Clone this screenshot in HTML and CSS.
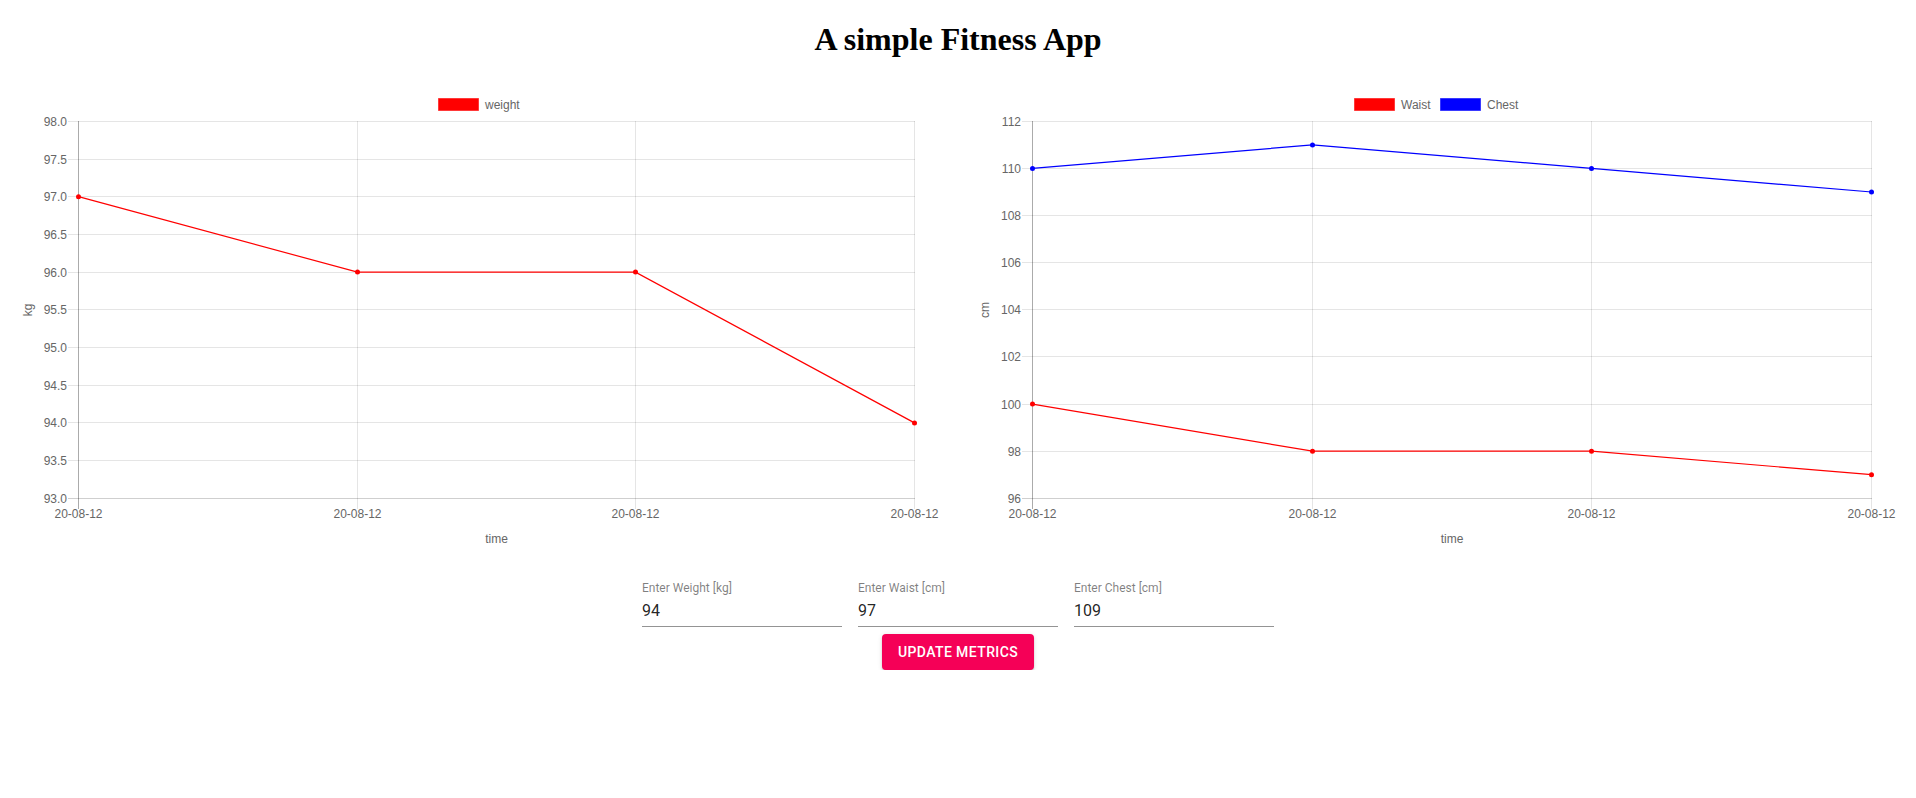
FILE: index.html
```
<!DOCTYPE html>
<html>
	<head>
		<title>A simple Fitness App</title>
		<meta charset="utf-8">
		<link rel="stylesheet" href="styles.css">
	</head>
	<body>
		<h1>A simple Fitness App</h1>
		<div class="charts">
			<!-- weight chart -->
			<svg class="chart" width="941" height="480" viewBox="0 0 941 480">
				<rect class="swatch red" x="430.5" y="19.5" width="40" height="12"/>
				<text class="legend" x="477" y="30">weight</text>

				<path class="grid" d="M60 42.5H907M60 80.5H907M60 117.5H907M60 155.5H907M60 193.5H907M60 230.5H907M60 268.5H907M60 306.5H907M60 343.5H907M60 381.5H907M349.5 42V430M627.5 42V430M906.5 42V430"/>
				<path class="border" d="M60 419.5H907"/>
				<path class="axis" d="M70.5 42V430"/>

				<g class="ticks-y">
					<text x="59" y="46.5">98.0</text>
					<text x="59" y="84.5">97.5</text>
					<text x="59" y="121.5">97.0</text>
					<text x="59" y="159.5">96.5</text>
					<text x="59" y="197.5">96.0</text>
					<text x="59" y="234.5">95.5</text>
					<text x="59" y="272.5">95.0</text>
					<text x="59" y="310.5">94.5</text>
					<text x="59" y="347.5">94.0</text>
					<text x="59" y="385.5">93.5</text>
					<text x="59" y="423.5">93.0</text>
				</g>
				<g class="ticks-x">
					<text x="70.5" y="439">20-08-12</text>
					<text x="349.5" y="439">20-08-12</text>
					<text x="627.5" y="439">20-08-12</text>
					<text x="906.5" y="439">20-08-12</text>
				</g>
				<text class="axis-title" x="488.5" y="464">time</text>
				<text class="axis-title" transform="translate(23.5 231) rotate(-90)">kg</text>

				<polyline class="line red" points="70.5,117.7 349.5,193.1 627.5,193.1 906.5,343.9"/>
				<g class="dots red">
					<circle cx="70.5" cy="117.7" r="2.5"/>
					<circle cx="349.5" cy="193.1" r="2.5"/>
					<circle cx="627.5" cy="193.1" r="2.5"/>
					<circle cx="906.5" cy="343.9" r="2.5"/>
				</g>
			</svg>

			<!-- waist / chest chart -->
			<svg class="chart" width="941" height="480" viewBox="0 0 941 480">
				<rect class="swatch red" x="389.5" y="19.5" width="40" height="12"/>
				<text class="legend" x="436" y="30">Waist</text>
				<rect class="swatch blue" x="475.5" y="19.5" width="40" height="12"/>
				<text class="legend" x="522" y="30">Chest</text>

				<path class="grid" d="M57 42.5H907M57 89.5H907M57 136.5H907M57 183.5H907M57 230.5H907M57 277.5H907M57 325.5H907M57 372.5H907M347.5 42V430M626.5 42V430M906.5 42V430"/>
				<path class="border" d="M57 419.5H907"/>
				<path class="axis" d="M67.5 42V430"/>

				<g class="ticks-y">
					<text x="56" y="46.5">112</text>
					<text x="56" y="93.5">110</text>
					<text x="56" y="140.5">108</text>
					<text x="56" y="187.5">106</text>
					<text x="56" y="234.5">104</text>
					<text x="56" y="281.5">102</text>
					<text x="56" y="329.5">100</text>
					<text x="56" y="376.5">98</text>
					<text x="56" y="423.5">96</text>
				</g>
				<g class="ticks-x">
					<text x="67.5" y="439">20-08-12</text>
					<text x="347.5" y="439">20-08-12</text>
					<text x="626.5" y="439">20-08-12</text>
					<text x="906.5" y="439">20-08-12</text>
				</g>
				<text class="axis-title" x="487" y="464">time</text>
				<text class="axis-title" transform="translate(23.5 231) rotate(-90)">cm</text>

				<polyline class="line red" points="67.5,325.1 347.5,372.2 626.5,372.2 906.5,395.7"/>
				<g class="dots red">
					<circle cx="67.5" cy="325.1" r="2.5"/>
					<circle cx="347.5" cy="372.2" r="2.5"/>
					<circle cx="626.5" cy="372.2" r="2.5"/>
					<circle cx="906.5" cy="395.7" r="2.5"/>
				</g>
				<polyline class="line blue" points="67.5,89.4 347.5,65.9 626.5,89.4 906.5,113"/>
				<g class="dots blue">
					<circle cx="67.5" cy="89.4" r="2.5"/>
					<circle cx="347.5" cy="65.9" r="2.5"/>
					<circle cx="626.5" cy="89.4" r="2.5"/>
					<circle cx="906.5" cy="113" r="2.5"/>
				</g>
			</svg>
		</div>

		<div class="metrics">
			<div class="fields">
				<label class="field">
					<span class="field-label">Enter Weight [kg]</span>
					<input type="text" value="94">
				</label>
				<label class="field">
					<span class="field-label">Enter Waist [cm]</span>
					<input type="text" value="97">
				</label>
				<label class="field">
					<span class="field-label">Enter Chest [cm]</span>
					<input type="text" value="109">
				</label>
			</div>
			<button class="update">Update Metrics</button>
		</div>
	</body>
</html>
```

FILE: styles.css
```
body {margin:8px;background:#fff;color:#000;font-family:"Liberation Serif",serif;}
h1 {font-family:"Liberation Serif",serif;font-size:32px;font-weight:bold;text-align:center;margin:13px 0 21.44px 0;line-height:normal;}

.charts {display:flex;gap:16px;}
.chart {display:block;flex:none;}
.chart text {font-family:"Liberation Sans",Arial,sans-serif;font-size:12px;fill:#666;}
.ticks-y text {text-anchor:end;}
.ticks-x text, .axis-title {text-anchor:middle;}
.grid {stroke:rgba(0,0,0,0.1);stroke-width:1;fill:none;}
.border {stroke:rgba(0,0,0,0.19);stroke-width:1;fill:none;}
.axis {stroke:rgba(0,0,0,0.33);stroke-width:1;fill:none;}
.swatch.red {fill:#f00;stroke:rgba(255,0,0,0.55);}
.swatch.blue {fill:#00f;stroke:rgba(0,0,255,0.55);}
.line {fill:none;stroke-width:1.2;}
.line.red {stroke:#f00;}
.line.blue {stroke:#00f;}
.dots.red {fill:#f00;}
.dots.blue {fill:#00f;}

.metrics {display:flex;flex-direction:column;align-items:center;margin-top:22px;}
.fields {display:flex;gap:16px;}
.field {display:flex;flex-direction:column;width:200px;font-family:Roboto,"Liberation Sans",sans-serif;}
.field-label {font-size:12px;line-height:14px;color:rgba(0,0,0,0.5);}
.field input {font-family:Roboto,"Liberation Sans",sans-serif;font-size:16px;line-height:19px;height:19px;color:rgba(0,0,0,0.87);border:0;border-bottom:1px solid rgba(0,0,0,0.42);padding:6px 0 6px 0;margin:0;background:none;outline:0;width:100%;box-sizing:content-box;}
.update {margin-top:7px;font-family:Roboto,"Liberation Sans",sans-serif;font-size:14px;font-weight:500;letter-spacing:0.02857em;text-transform:uppercase;line-height:24px;padding:6px 16px;color:#fff;background-color:#f50057;border:0;border-radius:4px;box-shadow:0 3px 1px -2px rgba(0,0,0,0.2),0 2px 2px 0 rgba(0,0,0,0.14),0 1px 5px 0 rgba(0,0,0,0.12);cursor:pointer;}
.update:hover {background-color:#c51162;}
```
